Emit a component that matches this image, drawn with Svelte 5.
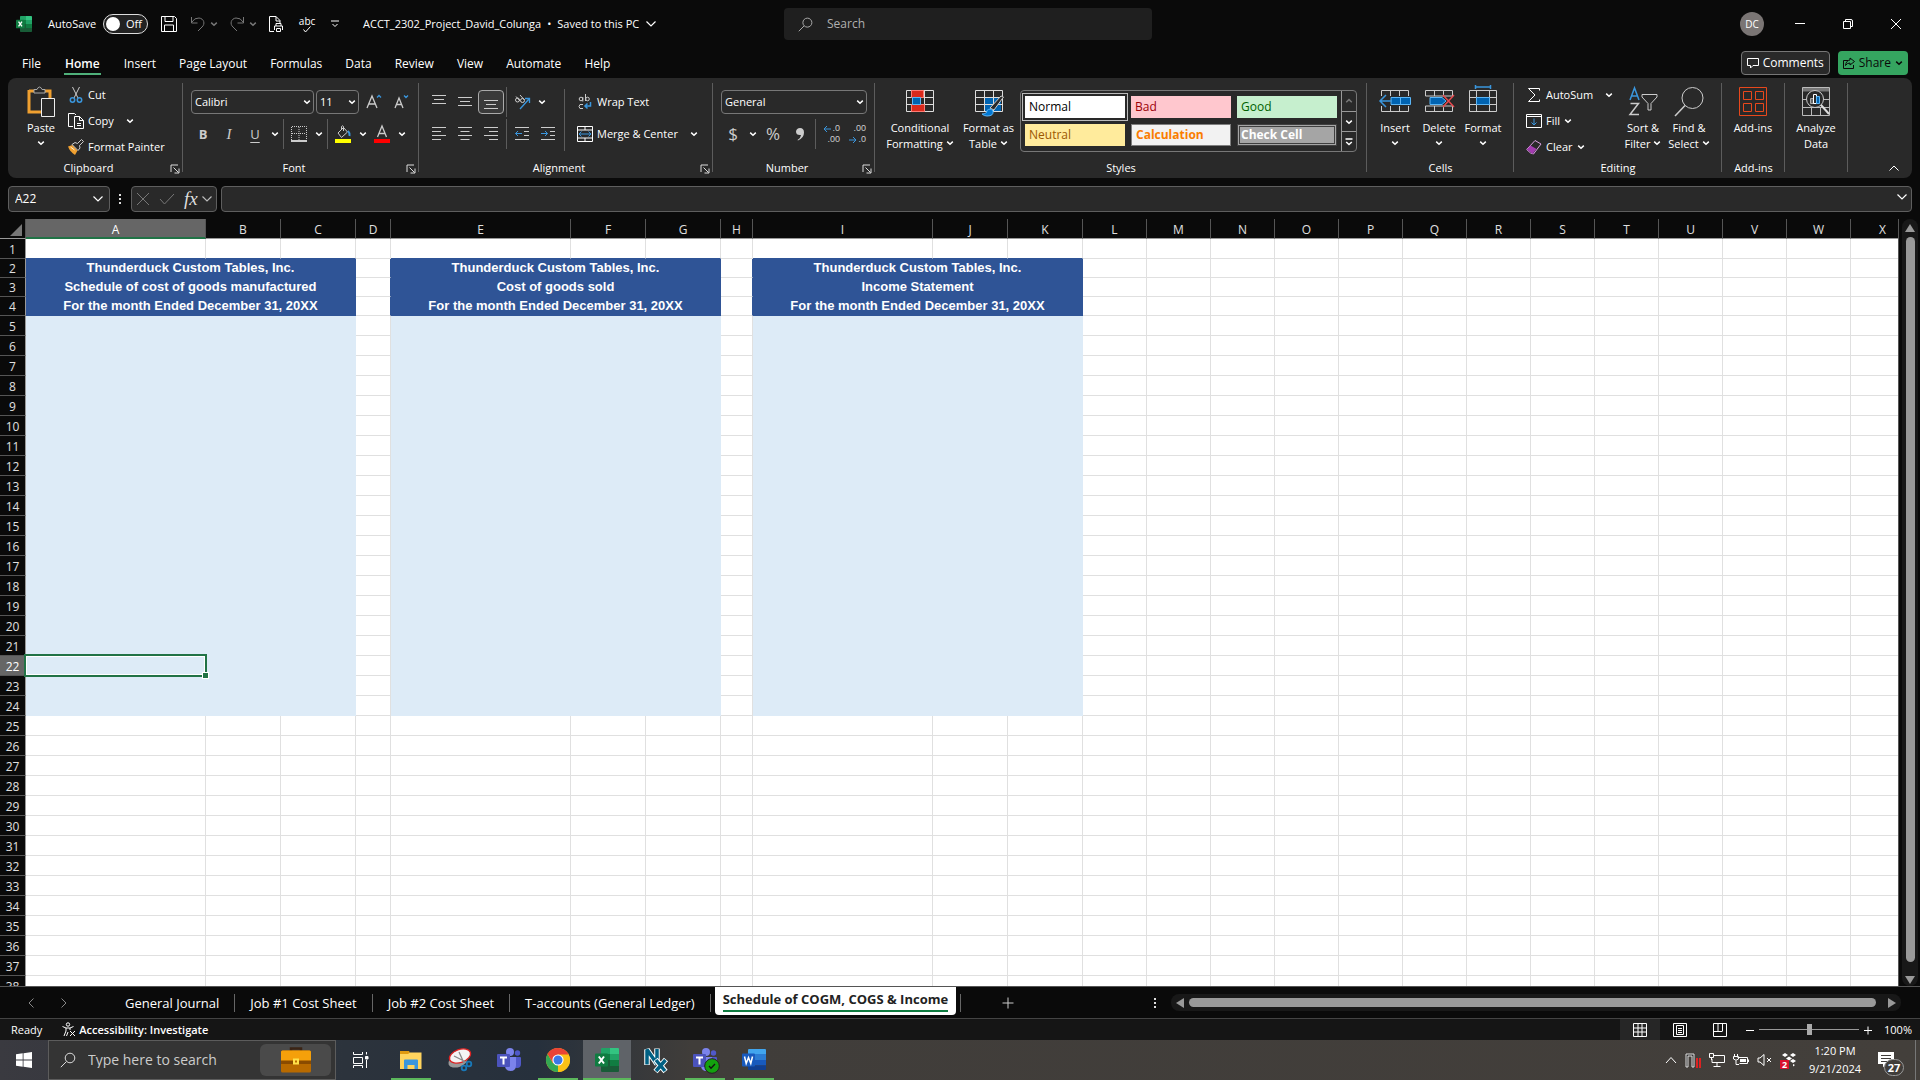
<script>
  const tabs = ['File', 'Home', 'Insert', 'Page Layout', 'Formulas', 'Data', 'Review', 'View', 'Automate', 'Help']
  const sheets = ['General Journal', 'Job #1 Cost Sheet', 'Job #2 Cost Sheet', 'T-accounts (General Ledger)']
  const activeSheet = 'Schedule of COGM, COGS & Income'

  const cellStyles = ['Normal', 'Bad', 'Good', 'Neutral', 'Calculation', 'Check Cell']

  const columns = [
    ['A', 'wide'], ['B', 'mid'], ['C', 'mid'], ['D', 'gap'],
    ['E', 'wide'], ['F', 'mid'], ['G', 'mid'], ['H', 'gap small'],
    ['I', 'wide'], ['J', 'mid'], ['K', 'mid'],
    ...'LMNOPQRSTUVWX'.split('').map((name) => [name, 'std'])
  ]

  const company = 'Thunderduck Custom Tables, Inc.'
  const period = 'For the month Ended December 31, 20XX'
  const headings = {
    2: [company, company, company],
    3: ['Schedule of cost of goods manufactured', 'Cost of goods sold', 'Income Statement'],
    4: [period, period, period]
  }

  const rows = Array.from({ length: 38 }, (_, i) => i + 1)
  const rest = columns.slice(11)

  // D and H stay empty between the three statements
  const isGap = (i) => i === 3 || i === 7
  const inSection = (i) => i < 11 && !isGap(i)

  let search = $state('')
  let zoom = $state(50)
</script>

{#snippet chev()}
  <svg class="chev" viewBox="0 0 8 8" width="8" height="8"><path d="M1.2 2.6 4 5.2l2.8-2.6" /></svg>
{/snippet}

{#snippet bigChev()}
  <svg class="chev thin" viewBox="0 0 12 8" width="12" height="8"><path d="M1.5 1.5 6 6l4.5-4.5" /></svg>
{/snippet}

{#snippet launcher()}
  <button class="launcher" aria-label="More options">
    <svg viewBox="0 0 10 10" width="10" height="10"><path d="M1 8V1h7M3.5 3.5l5 5M9 4.5V9H4.5" /></svg>
  </button>
{/snippet}

{#snippet excelLogo(size)}
  <svg viewBox="0 0 24 24" width={size} height={size}>
    <path fill="#21a366" d="M7 0h9v6H6V1q0-1 1-1z" />
    <path fill="#33c481" d="M15 0h8q1 0 1 1v5h-9z" />
    <path fill="#107c41" d="M6 6h9v6H6z" />
    <path fill="#21a366" d="M15 6h9v6h-9z" />
    <path fill="#185c37" d="M6 12h18v11q0 1-1 1H7q-1 0-1-1z" />
    <path fill="#107c41" d="M15 12h9v6h-9z" />
    <rect x="0" y="5.5" width="13" height="13" rx="1" fill="#107c41" />
    <path d="m3.8 8.5 5.2 7M9 8.5l-5.2 7" stroke="#fff" stroke-width="2" fill="none" />
  </svg>
{/snippet}

{#snippet teamsLogo()}
  <svg viewBox="0 0 24 24" width="24" height="24">
    <circle cx="20.5" cy="5" r="2.7" fill="#5059c9" />
    <path fill="#5059c9" d="M17 9h6q1 0 1 1v6q0 4-4 4-3 0-3-3z" />
    <circle cx="13" cy="4" r="4" fill="#7b83eb" />
    <path fill="#7b83eb" d="M8 9h11v8q0 6-5.5 6T8 17z" />
    <rect x="0" y="6" width="13" height="13" rx="1" fill="#4b53bc" />
    <path d="M3 9.5h7M6.500 9v7.500" stroke="#fff" stroke-width="2" />
  </svg>
{/snippet}

{#snippet lens(size)}
  <svg class="line" viewBox="0 0 16 16" width={size} height={size}><circle cx="10" cy="6" r="4.8" /><path d="M6.5 9.5.8 15.2" /></svg>
{/snippet}

<div class="window">
  <header class="titlebar">
    <div class="left">
      <div class="quick">
        {@render excelLogo(16)}
        <span class="autosave">AutoSave</span>
        <button class="toggle" role="switch" aria-checked="false" aria-label="AutoSave"><i></i>Off</button>
        <button aria-label="Save">
          <svg class="line" viewBox="0 0 16 16" width="16" height="16"><path d="M.5.5h13l2 2v13H.5zM4 .5v5h8v-5M3.5 15.5V9h9v6.5" /></svg>
        </button>
        <button class="dim pair" aria-label="Undo">
          <svg class="line" viewBox="0 0 16 16" width="16" height="16"><path d="M1.500 1v6h6M1.5 6.500q3-5 7.500-4.500c5 .5 6.500 6 3 9L8 15" /></svg>
          {@render chev()}
        </button>
        <button class="dim pair" aria-label="Redo">
          <svg class="line" viewBox="0 0 16 16" width="16" height="16"><path d="M14.500 1v6h-6M14.500 6.500q-3-5-7.500-4.500c-5 .5-6.500 6-3 9L8 15" /></svg>
          {@render chev()}
        </button>
        <button aria-label="Print preview">
          <svg class="line" viewBox="0 0 16 16" width="16" height="16"><path d="M6 15.500H1.500V.500H8l4 4V7M8 .5V5h4M8 10V7.500h5V10M6.500 14v-4h8v4M8.500 12.500h4v3h-4z" /></svg>
        </button>
        <button class="spell" aria-label="Spelling">abc
          <svg class="line" viewBox="0 0 10 7" width="10" height="7"><path d="m1.500 3.500 2 2.500 5-5.500" /></svg>
        </button>
        <button aria-label="Customize toolbar">
          <svg class="line" viewBox="0 0 10 8" width="10" height="8"><path d="M1 1h8M2.500 4 5 6.500 7.500 4" /></svg>
        </button>
      </div>
      <button class="doc"><span>ACCT_2302_Project_David_Colunga</span><span>•</span><span>Saved to this PC</span>{@render bigChev()}</button>
    </div>
    <label class="search">
      {@render lens(15)}
      <input type="text" placeholder="Search" aria-label="Search" bind:value={search} />
    </label>
    <div class="caption-buttons">
      <button class="avatar">DC</button>
      <button aria-label="Minimize"><svg class="line" viewBox="0 0 12 12" width="12" height="12"><path d="M1 5.500h10" /></svg></button>
      <button aria-label="Restore"><svg class="line" viewBox="0 0 12 12" width="12" height="12"><path d="M1.500 3.500h7v7h-7zM3.500 3V1.500H9Q10.500 1.500 10.500 3v5.500H9" /></svg></button>
      <button aria-label="Close"><svg class="line" viewBox="0 0 12 12" width="12" height="12"><path d="m1 1 10 10M11 1 1 11" /></svg></button>
    </div>
  </header>

  <nav class="tabs">
    {#each tabs as tab}
      <a href="#{tab}" class:active={tab === 'Home'}>{tab}</a>
    {/each}
    <div class="actions">
      <button class="comments">
        <svg class="line" viewBox="0 0 12 12" width="12" height="12"><path d="M.5 1.500h11v7H6L3.500 11V8.500h-3z" /></svg>
        Comments
      </button>
      <button class="share">
        <svg class="line" viewBox="0 0 12 12" width="12" height="12"><path d="M5 3.500H.500v8h10V8M7 1l4.500 3.500L7 8V6Q4 6 2.500 8.500 3 3.500 7 3z" /></svg>
        Share {@render chev()}
      </button>
    </div>
  </nav>

  <section class="ribbon">
    <div class="group clipboard">
      <div class="tools">
        <button class="large">
          <svg viewBox="0 0 30 32" width="30" height="32">
            <path d="M3 5h5m11 0h5v7M3 4v22h13" fill="none" stroke="#f0a030" stroke-width="3" />
            <path d="M8 7V3.500h3q1-2.500 2.500-2.500T16 3.500h3V7z" fill="#292929" stroke="#aaa" />
            <path d="M15.500 12.500h13v18h-13z" fill="#292929" stroke="#eee" />
          </svg>
          <span>Paste</span><span>{@render chev()}</span>
        </button>
        <div class="stack">
          <button>
            <svg viewBox="0 0 16 16" width="16" height="16" fill="none"><path d="M4.500 0 10 11M11.500 0 6 11" stroke="#ccc" /><circle cx="4.500" cy="13" r="2.200" stroke="#3a96dd" stroke-width="1.500" /><circle cx="11.500" cy="13" r="2.200" stroke="#3a96dd" stroke-width="1.500" /></svg>
            Cut
          </button>
          <button>
            <svg class="line" viewBox="0 0 16 16" width="16" height="16"><path d="M5 13.500H.500V.500h6L8 2M6.500 3.500h5l4 4v8h-9zM11.500 3.500v4h4M9 10.500h4M9 12.500h4" /></svg>
            Copy <em>{@render chev()}</em>
          </button>
          <button>
            <svg viewBox="0 0 16 16" width="16" height="16"><path d="M0 7.500 4.500 6l5 5.500L7 16Q2 13 0 7.500z" fill="#f0a030" /><path d="m4 5.500 3-2 2.500 1L13.500.500 15.500 2.500l-4 4 .5 2.500-2 2.500z" fill="#292929" stroke="#ccc" /><path d="m2.500 8 4 3" stroke="#fff0cc" /></svg>
            Format Painter
          </button>
        </div>
      </div>
      <footer class="has-launcher">Clipboard {@render launcher()}</footer>
    </div>

    <div class="group font">
      <div class="tools rows">
        <div class="row fields">
          <label class="select family"><select aria-label="Font"><option>Calibri</option></select>{@render chev()}</label>
          <label class="select size"><select aria-label="Font size"><option>11</option></select>{@render chev()}</label>
          <button class="cell" aria-label="Increase font size"><svg viewBox="0 0 16 16" width="16" height="16" fill="none"><path d="M1 14 6 2l5 12M3 10h6" stroke="#ccc" stroke-width="1.300" /><path d="m11 3.500 2-2 2 2" stroke="#3a96dd" stroke-width="1.300" /></svg></button>
          <button class="cell" aria-label="Decrease font size"><svg viewBox="0 0 16 16" width="16" height="16" fill="none"><path d="m1 14 4-10 4 10M2.500 10.500h5" stroke="#ccc" stroke-width="1.300" /><path d="m10 1.500 2 2 2-2" stroke="#3a96dd" stroke-width="1.300" /></svg></button>
        </div>
        <div class="row">
          <button class="cell glyph"><b>B</b></button>
          <button class="cell glyph italic">I</button>
          <button class="cell glyph under">U</button>
          <button class="arrow" aria-label="Underline options">{@render chev()}</button>
          <i class="rule"></i>
          <button class="cell" aria-label="Borders"><svg class="line" viewBox="0 0 16 16" width="16" height="16"><path d="M.5 14V.500h15V14M8 1v13M1 7.500h14" stroke-dasharray="1 1" /><path d="M0 15h16" stroke-width="2" /></svg></button>
          <button class="arrow" aria-label="Border options">{@render chev()}</button>
          <i class="rule"></i>
          <button class="cell" aria-label="Fill color"><svg viewBox="0 0 16 18" width="16" height="18" fill="none"><path d="m3 8 5.500-5.500 4 4.500-6 5.500zM6.500 5V1.500q1.500-1.500 2 0V6" stroke="#ccc" /><path d="M13 6q2 2 1.500 5" stroke="#3a96dd" stroke-width="2" /><path d="M0 14h16v4H0z" fill="#ff0" /></svg></button>
          <button class="arrow" aria-label="Fill options">{@render chev()}</button>
          <button class="cell" aria-label="Font color"><svg viewBox="0 0 16 18" width="16" height="18" fill="none"><path d="m3.500 12 4.500-11 4.500 11M5 8.500h6" stroke="#ccc" stroke-width="1.300" /><path d="M0 14h16v4H0z" fill="red" /></svg></button>
          <button class="arrow" aria-label="Font color options">{@render chev()}</button>
        </div>
      </div>
      <footer class="has-launcher">Font {@render launcher()}</footer>
    </div>

    <div class="group alignment">
      <div class="tools">
        <div class="rows">
          <div class="row">
            <button class="cell" aria-label="Top align"><svg class="line" viewBox="0 0 16 16" width="16" height="16"><path d="M1 1.500h14M3 5.500h10M1 9.500h14" /></svg></button>
            <button class="cell" aria-label="Middle align"><svg class="line" viewBox="0 0 16 16" width="16" height="16"><path d="M1 3.500h14M3 7.500h10M1 11.500h14" /></svg></button>
            <button class="cell pressed" aria-label="Bottom align"><svg class="line" viewBox="0 0 16 16" width="16" height="16"><path d="M1 6.500h14M3 10.500h10M1 14.500h14" /></svg></button>
            <i class="rule"></i>
            <button class="cell" aria-label="Orientation"><svg viewBox="0 0 16 16" width="16" height="16" fill="none"><circle cx="3.500" cy="6" r="2" stroke="#ccc" /><path d="M2 2.500 6 7M6 1l4.500 5" stroke="#ccc" /><circle cx="8.500" cy="6.500" r="2" stroke="#ccc" /><path d="M6 15 15 5m-4-.5h4.500V9" stroke="#3a96dd" stroke-width="1.300" /></svg></button>
            <button class="arrow" aria-label="Orientation options">{@render chev()}</button>
          </div>
          <div class="row">
            <button class="cell" aria-label="Align left"><svg class="line" viewBox="0 0 16 16" width="16" height="16"><path d="M1 1.500h14M1 5.500h9M1 9.500h14M1 13.500h9" /></svg></button>
            <button class="cell" aria-label="Center"><svg class="line" viewBox="0 0 16 16" width="16" height="16"><path d="M1 1.500h14M3.500 5.500h9M1 9.500h14M3.500 13.500h9" /></svg></button>
            <button class="cell" aria-label="Align right"><svg class="line" viewBox="0 0 16 16" width="16" height="16"><path d="M1 1.500h14M6 5.500h9M1 9.500h14M6 13.500h9" /></svg></button>
            <i class="rule"></i>
            <button class="cell" aria-label="Decrease indent"><svg class="line" viewBox="0 0 16 16" width="16" height="16"><path d="M1 1.500h14M10 5.500h5M10 9.500h5M1 13.500h14" /><path d="M8 7.500H1.500M4 5 1.500 7.500 4 10" class="blue" /></svg></button>
            <button class="cell" aria-label="Increase indent"><svg class="line" viewBox="0 0 16 16" width="16" height="16"><path d="M1 1.500h14M10 5.500h5M10 9.500h5M1 13.500h14" /><path d="M1 7.500h6.500M5 5l2.500 2.500L5 10" class="blue" /></svg></button>
          </div>
        </div>
        <i class="rule tall"></i>
        <div class="rows">
          <button class="text">
            <svg viewBox="0 0 16 16" width="16" height="16" fill="none"><circle cx="4" cy="5" r="1.800" stroke="#ccc" /><path d="M5.800 3v4.500M8.500 0v7" stroke="#ccc" /><circle cx="10.500" cy="5" r="1.800" stroke="#ccc" /><path d="M6 10.500Q2 9.500 2 12.500T6 14.500" stroke="#ccc" /><path d="M13.500 8v4H8m2.500-2.500L8 12l2.500 2.500" stroke="#3a96dd" stroke-width="1.500" /></svg>
            Wrap Text
          </button>
          <button class="text">
            <svg class="line" viewBox="0 0 16 16" width="16" height="16"><path d="M.5.500h15v15H.500zM.500 4h15M.500 12h15M8 .500V4M8 12v3.500" /><path d="M2 8h12M4.500 5.500 2 8l2.500 2.500M11.500 5.500 14 8l-2.500 2.500" class="blue" /></svg>
            Merge &amp; Center <em>{@render chev()}</em>
          </button>
        </div>
      </div>
      <footer class="has-launcher">Alignment {@render launcher()}</footer>
    </div>

    <div class="group number">
      <div class="tools rows">
        <div class="row fields">
          <label class="select format"><select aria-label="Number format"><option>General</option></select>{@render chev()}</label>
        </div>
        <div class="row">
          <button class="cell glyph money">$</button>
          <button class="arrow" aria-label="Currency options">{@render chev()}</button>
          <button class="cell glyph money percent-style">%</button>
          <button class="cell" aria-label="Comma style"><svg viewBox="0 0 10 14" width="10" height="14"><path d="M5 1q4 0 4 4.500Q9 11 3 13.500L2.500 13Q6 10.500 6 8 1 8.500 1 4.500 1.500 1 5 1z" fill="#ccc" /></svg></button>
          <i class="rule"></i>
          <button class="cell decimals" aria-label="Increase decimal">
            <span><svg class="line" viewBox="0 0 8 8" width="8" height="8"><path d="M8 4H1M4 1 1 4l3 3" class="blue" /></svg>.0</span>
            <span>.00</span>
          </button>
          <button class="cell decimals" aria-label="Decrease decimal">
            <span>.00</span>
            <span><svg class="line" viewBox="0 0 8 8" width="8" height="8"><path d="M0 4h7M4 1l3 3-3 3" class="blue" /></svg>.0</span>
          </button>
        </div>
      </div>
      <footer class="has-launcher">Number {@render launcher()}</footer>
    </div>

    <div class="group styles">
      <div class="tools">
        <button class="large">
          <svg viewBox="0 0 30 32" width="30" height="32" fill="none">
            <path d="M1.500 4.500h27v21h-27zM1.500 11.500h27M1.500 18.500h27M7.500 4v21M19.500 4v21" stroke="#ddd" />
            <path d="M6.500 4.500h12v7h-12zM6.500 18.500h13v7h-13z" fill="#d9291c" stroke="#ff7b73" /><path d="M7.500 11.500h8v7h-8z" fill="#0063b1" stroke="#5bb5f5" />
          </svg>
          <span>Conditional</span><span>Formatting {@render chev()}</span>
        </button>
        <button class="large">
          <svg viewBox="0 0 30 32" width="30" height="32" fill="none">
            <path d="M10 11h17v14H10z" fill="#0063b1" />
            <path d="M1.500 4.500h27v21h-27zM1.500 11.500h27M1.500 18.500h27M10.500 4v21M19.500 4v21" stroke="#ddd" />
            <path d="m16 22 11-12 2.500 1L20 24z" fill="#292929" stroke="#ccc" /><path d="M8 28q5 0 5-3.500 3-3 6 .5 1 5-6 5-3 0-5-2z" fill="#0078d4" stroke="#5bb5f5" />
          </svg>
          <span>Format as</span><span>Table {@render chev()}</span>
        </button>
        <div class="gallery">
          <div class="swatches">
            {#each cellStyles as name}
              <button class={name.toLowerCase().replace(' ', '-')}>{name}</button>
            {/each}
          </div>
          <div class="pager">
            <button class="dim" aria-label="Previous styles"><svg class="chev" viewBox="0 0 8 8" width="8" height="8"><path d="M1.200 5.200 4 2.600l2.800 2.600" /></svg></button>
            <button aria-label="Next styles">{@render chev()}</button>
            <button aria-label="All styles"><svg class="chev" viewBox="0 0 8 8" width="8" height="8"><path d="M.5 1h7M1.200 4 4 6.600 6.800 4" /></svg></button>
          </div>
        </div>
      </div>
      <footer>Styles</footer>
    </div>

    <div class="group cells">
      <div class="tools">
        <button class="large">
          <svg viewBox="0 0 32 32" width="32" height="32" fill="none">
            <path d="M2.500 4.500h27v21h-27zM11.500 4v21M20.500 4v21" stroke="#ccc" /><path d="M0 10h32v10H0z" fill="#292929" /><path d="M12 11.500h19.500v7H12zM21.500 11v7" fill="#0063b1" stroke="#5bb5f5" /><path d="M13 15H1.500M7 9 1 15l6 6" stroke="#3a96dd" stroke-width="1.500" />
          </svg>
          <span>Insert</span><span>{@render chev()}</span>
        </button>
        <button class="large">
          <svg viewBox="0 0 32 32" width="32" height="32" fill="none">
            <path d="M2.500 10V4.500h27V10M2.500 20v5.500h27V20M11.500 4v6M20.500 4v6M11.500 20v5M20.500 20v5M2.500 10H29M2.500 20H29" stroke="#ccc" /><path d="M7 11.500h12l4 3.500-4 3.500H7z" fill="#0063b1" stroke="#5bb5f5" /><path d="m20 9 11 12M31 9 20 21" stroke="#e8484d" stroke-width="1.500" />
          </svg>
          <span>Delete</span><span>{@render chev()}</span>
        </button>
        <button class="large">
          <svg viewBox="0 0 32 32" width="32" height="32" fill="none">
            <path d="M2.500 4.500h27v21h-27zM2.500 11.500h27M2.500 18.500h27M9.500 4v21M22.500 4v21" stroke="#ccc" /><path d="M9.500 11.500h13v7h-13z" fill="#0063b1" stroke="#5bb5f5" /><path d="M9 1h14M8.500-1v4M23.500-1v4" stroke="#3a96dd" stroke-width="1.500" />
          </svg>
          <span>Format</span><span>{@render chev()}</span>
        </button>
      </div>
      <footer>Cells</footer>
    </div>

    <div class="group editing">
      <div class="tools">
        <div class="stack">
          <button>
            <svg class="line" viewBox="0 0 16 16" width="16" height="16"><path d="M13.500 3.500v-2h-11L9 8l-6.500 6.500h11v-2" /></svg>
            AutoSum <em>{@render chev()}</em>
          </button>
          <button>
            <svg class="line" viewBox="0 0 16 16" width="16" height="16"><path d="M.5 1.500h15v13H.500zM.500 3.500h15" /><path d="M8 5.500V12M5.500 9.500 8 12l2.500-2.500" class="blue" /></svg>
            Fill {@render chev()}
          </button>
          <button>
            <svg viewBox="0 0 16 16" width="16" height="16"><path d="M.7 10.500 9 1.500l6 3.500-7.500 10L4.500 14z" fill="none" stroke="#d9a0e0" /><path d="m1 10.500 3.500-4L10.500 10l-4 5z" fill="#a33bb0" /></svg>
            Clear {@render chev()}
          </button>
        </div>
        <button class="large">
          <svg viewBox="0 0 30 32" width="30" height="32" fill="none">
            <path d="M2 14 6.500 2 11 14M3.500 10h6" stroke="#3a96dd" stroke-width="1.500" /><path d="M2.500 17.500h8L2 28.500h9" stroke="#ccc" stroke-width="1.500" /><path d="M14 8.500h15v2.500l-6 6.500V24h-3v-6.500L14 11z" stroke="#ccc" />
          </svg>
          <span>Sort &amp;</span><span>Filter {@render chev()}</span>
        </button>
        <button class="large">
          <svg viewBox="0 0 30 32" width="30" height="32" fill="none"><circle cx="18.500" cy="12" r="10.500" stroke="#ccc" /><path d="M11 19.500 1 30" stroke="#ccc" stroke-width="1.500" /></svg>
          <span>Find &amp;</span><span>Select {@render chev()}</span>
        </button>
      </div>
      <footer>Editing</footer>
    </div>

    <div class="group addins">
      <div class="tools">
        <button class="large">
          <svg viewBox="0 0 30 32" width="30" height="32" fill="none" stroke="#e8481c"><path d="M1.500 1.500h27v28h-27zM5.500 5.500h8v8h-8zM17.500 5.500h8v8h-8zM5.500 17.500h8v8h-8zM17.500 17.500h8v8h-8z" /></svg>
          <span>Add-ins</span>
        </button>
      </div>
      <footer>Add-ins</footer>
    </div>

    <div class="group addins">
      <div class="tools">
        <button class="large">
          <svg viewBox="0 0 30 32" width="30" height="32" fill="none">
            <path d="M1.500 1.500h27v4h-27z" fill="#777" /><path d="M1.500 1.500h27v28h-27zM1.500 13.500h27M1.500 21.500h27M10.500 22v7M19.500 22v7" stroke="#bbb" /><circle cx="14" cy="13" r="8.500" fill="#292929" stroke="#ccc" /><path d="m20 19 8 9" stroke="#ddd" stroke-width="2" /><path d="M9.500 12.500h3v5h-3z" fill="#666" stroke="#aaa" /><path d="M12.500 8.500h3v9h-3z" stroke="#fff" /><path d="M15.500 10.500h3v7h-3z" fill="#0063b1" stroke="#5bb5f5" />
          </svg>
          <span>Analyze</span><span>Data</span>
        </button>
      </div>
    </div>
    <button class="collapse" aria-label="Collapse ribbon"><svg class="line" viewBox="0 0 12 8" width="12" height="8"><path d="M1.500 6.500 6 2l4.500 4.500" /></svg></button>
  </section>

  <section class="formula">
    <label class="namebox"><input type="text" value="A22" aria-label="Name box" />{@render bigChev()}</label>
    <svg class="dots" viewBox="0 0 3 12" width="3" height="12"><path d="M0 1h2v2H0zM0 5h2v2H0zM0 9h2v2H0z" /></svg>
    <div class="fx">
      <button class="dim" aria-label="Cancel"><svg class="line" viewBox="0 0 14 14" width="14" height="14"><path d="m1 1 12 12M13 1 1 13" /></svg></button>
      <button class="dim" aria-label="Enter"><svg class="line" viewBox="0 0 16 14" width="16" height="14"><path d="m1 7 4.500 5L15 2" /></svg></button>
      <button class="fn">fx</button>
      {@render bigChev()}
    </div>
    <label class="entry"><input type="text" aria-label="Formula" />{@render bigChev()}</label>
  </section>

  <main>
    <div class="sheet">
      <table>
        <colgroup>
          <col class="numbers" />
          {#each columns as [name, kind]}<col class={kind} />{/each}
        </colgroup>
        <thead>
          <tr>
            <th class="corner"><svg viewBox="0 0 12 12" width="12" height="12"><path d="M12 0v12H0z" /></svg></th>
            {#each columns as [name]}<th class:current={name === 'A'}>{name}</th>{/each}
          </tr>
        </thead>
        <tbody>
          {#each rows as row}
            {#if headings[row]}
              <tr class="heading">
                <th>{row}</th>
                {#each headings[row] as text, i}
                  <td colspan="3" class="title">{text}</td>
                  {#if i < 2}<td class="edge"></td>{/if}
                {/each}
                {#each rest as _}<td></td>{/each}
              </tr>
            {:else}
              <tr>
                <th class:current={row === 22}>{row}</th>
                {#each columns as _, i}
                  <td class:filled={row > 4 && row < 25 && inSection(i)} class:above={row === 1 && inSection(i)}>
                    {#if row === 22 && i === 0}<div class="selection"></div>{/if}
                  </td>
                {/each}
              </tr>
            {/if}
          {/each}
        </tbody>
      </table>
    </div>
    <div class="vscroll">
      <svg viewBox="0 0 10 8" width="10" height="8"><path d="M5 0 10 8H0z" /></svg>
      <div class="thumb"></div>
      <svg viewBox="0 0 10 8" width="10" height="8"><path d="M0 0h10L5 8z" /></svg>
    </div>
  </main>

  <section class="sheets">
    <div class="arrows">
      <button aria-label="Previous sheet"><svg class="line" viewBox="0 0 8 12" width="8" height="12"><path d="M6.500 1.500 2 6l4.500 4.500" /></svg></button>
      <button aria-label="Next sheet"><svg class="line" viewBox="0 0 8 12" width="8" height="12"><path d="M1.500 1.500 6 6l-4.500 4.500" /></svg></button>
    </div>
    {#each sheets as sheet}
      <button class="sheet-tab">{sheet}</button>
    {/each}
    <button class="sheet-tab current"><span>{activeSheet}</span></button>
    <button class="add" aria-label="New sheet"><svg class="line" viewBox="0 0 12 12" width="12" height="12"><path d="M6 .500v11M.500 6h11" /></svg></button>
    <svg class="dots" viewBox="0 0 3 12" width="3" height="12"><path d="M0 1h2v2H0zM0 5h2v2H0zM0 9h2v2H0z" /></svg>
    <div class="hscroll">
      <svg viewBox="0 0 8 10" width="8" height="10"><path d="M8 0v10L0 5z" /></svg>
      <div class="thumb"></div>
      <svg viewBox="0 0 8 10" width="8" height="10"><path d="M0 0v10l8-5z" /></svg>
    </div>
  </section>

  <section class="status">
    <span>Ready</span>
    <button class="access">
      <svg class="line" viewBox="0 0 15 15" width="15" height="15"><circle cx="7" cy="2.500" r="1.700" /><path d="M1.500 4.500 5 6v3l-2 5M12.500 4.500 9 6v2M5 6h4M5.500 14 7 10M9 9l5 5M14 9l-5 5" /></svg>
      Accessibility: Investigate
    </button>
    <div class="views">
      <button class="on" aria-label="Normal view"><svg class="line" viewBox="0 0 14 14" width="14" height="14"><path d="M.5.500h13v13H.500zM.500 5h13M.500 9h13M5 .500v13M9 .500v13" /></svg></button>
      <button aria-label="Page layout view"><svg class="line" viewBox="0 0 14 14" width="14" height="14"><path d="M.5.500h13v13H.500zM3.500 2.500h7v9h-7zM5 5.500h4M5 7.500h4M5 9.500h4" /></svg></button>
      <button aria-label="Page break view"><svg class="line" viewBox="0 0 14 14" width="14" height="14"><path d="M.5.500h13v13H.500zM5 .500V8M9.500.500V8M.500 8.500h9" /></svg></button>
    </div>
    <button class="step" aria-label="Zoom out"><svg class="line" viewBox="0 0 10 10" width="10" height="10"><path d="M1 5.500h8" /></svg></button>
    <input type="range" min="0" max="100" aria-label="Zoom" bind:value={zoom} />
    <button class="step" aria-label="Zoom in"><svg class="line" viewBox="0 0 10 10" width="10" height="10"><path d="M1 5.500h8M5 1.500v8" /></svg></button>
    <button class="percent">100%</button>
  </section>

  <footer class="taskbar">
    <button class="start" aria-label="Start"><svg viewBox="0 0 16 16" width="16" height="16"><path fill="#fff" d="m0 2.300 6.700-1v6.300H0zM7.500 1.200 16 0v7.600H7.500zM0 8.400h6.700v6.300l-6.700-1zM7.500 8.400H16V16l-8.500-1.200z" /></svg></button>
    <label class="find">
      {@render lens(16)}
      <input type="text" placeholder="Type here to search" aria-label="Type here to search" />
      <span class="bag">
        <svg viewBox="0 0 32 26" width="32" height="26"><path d="M11 4V1.500h10V4" fill="none" stroke="#3b2415" stroke-width="2.500" /><rect x="1" y="3.500" width="30" height="22" rx="1.500" fill="#b86a00" /><path d="M1 5q0-1.500 1.500-1.500h27Q31 3.500 31 5v10H1z" fill="#f5a00a" /><path d="M1 13.500h30V17H1z" fill="#8a4b00" /><path d="M13 11.500h6v6h-6z" fill="#ffe14a" /><path d="M15 13.500h2v2h-2z" fill="#b86a00" /></svg>
      </span>
    </label>
    <div class="apps">
      <button class="view" aria-label="Task view"><svg class="line" viewBox="0 0 18 16" width="18" height="16"><path d="M1.500 0v2.500h9V0M1.500 5.500h9v6h-9zM1.500 16v-2.500h9V16M14.500 0v2.500M14.500 8v8" /><path d="M13.500 4.500h2.500v2.500h-2.500z" fill="#fff" /></svg></button>
      <button class="app open" aria-label="File Explorer"><svg viewBox="0 0 24 24" width="24" height="24"><path fill="#e09a10" d="M1 3h9l1 2-1 3H1z" /><path fill="#ffd45e" d="M1 6h8l2-1.500h11.500V21H1z" /><path fill="#3a96dd" d="M5 21v-8.500q0-1 1-1h12q1 0 1 1V21h-3.500v-4h-7v4z" /></svg></button>
      <button class="app" aria-label="Snipping Tool"><svg viewBox="0 0 24 24" width="24" height="24" fill="none"><ellipse cx="10" cy="13" rx="10" ry="6" transform="rotate(-20 10 13)" fill="#999" /><ellipse cx="12" cy="8" rx="11" ry="6.500" transform="rotate(-20 12 8)" fill="#f4f4f4" stroke="#d22" stroke-width="1.300" /><path d="m11 4 5 11M6 8l12 6" stroke="#888" stroke-width="1.300" /><circle cx="16" cy="20" r="2.300" stroke="#1878b8" stroke-width="1.800" /><circle cx="21" cy="16" r="2.300" stroke="#1878b8" stroke-width="1.800" /></svg></button>
      <button class="app" aria-label="Teams">{@render teamsLogo()}</button>
      <button class="app open" aria-label="Chrome"><svg viewBox="0 0 24 24" width="24" height="24"><circle cx="12" cy="12" r="12" fill="#fbc116" /><path fill="#34a853" d="M12 12v12A12 12 0 0 1 1.600 6l5.200 9z" /><path fill="#fbc116" d="M12 6.500h10.700A12 12 0 0 1 12 24l5-9z" /><path fill="#ea4335" d="M7 15 1.600 6a12 12 0 0 1 21 .500H12z" /><circle cx="12" cy="12" r="5.600" fill="#fff" /><circle cx="12" cy="12" r="4.500" fill="#3b78e7" /></svg></button>
      <button class="app open focused" aria-label="Excel">{@render excelLogo(24)}</button>
      <button class="app" aria-label="NX"><svg viewBox="0 0 24 24" width="24" height="24" fill="none" stroke-linejoin="bevel"><path d="M3 17V1.500L13 16V.500" stroke="#fff" stroke-width="5.500" /><path d="M3 16.500V1.500L13 16V1" stroke="#006083" stroke-width="3.500" /><path d="m11.500 11.500 10 12M22 11.500l-10.500 12" stroke="#fff" stroke-width="5.500" /><path d="m12 12 9 11M21.500 12 12 23" stroke="#006083" stroke-width="3.500" /></svg></button>
      <button class="app open" aria-label="Teams meeting"><span class="badged">{@render teamsLogo()}<svg class="ok" viewBox="0 0 16 16" width="16" height="16"><circle cx="8" cy="8" r="7.300" fill="#13a10e" stroke="#222" /><path d="m5 8 2 2.300L11 6" fill="none" stroke="#111" stroke-width="1.300" /></svg></span></button>
      <button class="app open" aria-label="Word"><svg viewBox="0 0 24 24" width="24" height="24"><path fill="#41a5ee" d="M7 1h16q1 0 1 1v4H6V2q0-1 1-1z" /><path fill="#2b7cd3" d="M6 6h18v6H6z" /><path fill="#185abd" d="M6 12h18v5.500H6z" /><path fill="#103f91" d="M6 17.500h18V21q0 1-1 1H7q-1 0-1-1z" /><rect x="0" y="5.500" width="13" height="13" rx="1" fill="#185abd" /><path d="m2.500 8.500 1.700 7 2.300-6 2.300 6 1.700-7" stroke="#fff" stroke-width="1.500" fill="none" /></svg></button>
    </div>
    <div class="tray">
      <button aria-label="Show hidden icons"><svg class="line" viewBox="0 0 12 8" width="12" height="8"><path d="M1 7 6 1.500 11 7" /></svg></button>
      <svg viewBox="0 0 16 16" width="16" height="16" fill="none"><path d="M1 15V2h8v13H7V4H3v11z" fill="#333" stroke="#ddd" /><path d="M12 6v10M15 6v10" stroke="#d22" stroke-width="2" /></svg>
      <svg class="line" viewBox="0 0 16 16" width="16" height="16"><path d="M5 3.500h10.500v7H3V7M8 11v3.500M4.500 14.500h7M.500 1.500h4v4h-4zM2.500 5.500V8" /></svg>
      <svg viewBox="0 0 16 16" width="16" height="16" fill="none"><path d="M4.500 5.500h10v6h-8" stroke="#fff" /><path d="M7 7h6v3H7zM15 7.500h1v2.500h-1z" fill="#fff" /><path d="M1.500 2v2M4.500 2v2M.500 4.500h5V7Q3 9.500.5 7zM3 8.500v4h3" stroke="#fff" /></svg>
      <svg class="line" viewBox="0 0 16 16" width="16" height="16"><path d="M1 6h2l4-3.500v11L3 10H1zM10 6l4 4M14 6l-4 4" /></svg>
      <span class="badged"><svg viewBox="0 0 16 16" width="16" height="16"><path fill="#fff" d="m4 1 3 2-3 2-3-2zM12 1l3 2-3 2-3-2zM8 4.500l3 2-3 2-3-2zM12 7l3 2-3 2-3-2zM12 12l2 1-2 1.500z" /></svg><b class="count">2</b></span>
      <time><span>1:20 PM</span><span>9/21/2024</span></time>
      <button class="badged" aria-label="Notifications"><svg viewBox="0 0 16 16" width="16" height="16"><path fill="#fff" d="M0 0h16v12H8l-3 3.500V12H0z" /><path d="M3 3.500h10M3 6.500h10M3 9.500h6" stroke="#403d3a" /></svg><b class="bubble">27</b></button>
    </div>
  </footer>
</div>

<style>
  :global(body) {
    background: #0a0a0a;
  }

  .window {
    display: flex;
    flex-direction: column;
    height: 100vh;
    overflow: hidden;
    background: #0a0a0a;
    color: #fff;
    font: 12px/16px 'Open Sans', 'Noto Sans', sans-serif;
  }

  button,
  input,
  select {
    font: inherit;
    color: inherit;
    background: none;
    border: 0;
    padding: 0;
    margin: 0;
    min-width: 0;
    outline: none;
  }

  button,
  label {
    display: flex;
    align-items: center;
  }

  svg {
    flex: none;
    display: block;
    overflow: visible;
  }

  .line,
  .chev {
    fill: none;
    stroke: currentColor;
  }

  .chev {
    stroke-width: 1.5;
  }

  .thin {
    stroke-width: 1.2;
  }

  .blue {
    stroke: #3a96dd;
  }

  .dim {
    color: #777;
  }

  /* title bar */
  .titlebar {
    display: grid;
    grid-template-columns: 1fr 368px 1fr;
    align-items: center;
    height: 48px;
    flex: none;
    padding-left: 16px;
  }

  .left {
    display: flex;
    align-items: center;
  }

  .quick {
    display: flex;
    align-items: center;
    gap: 13px;
    width: 347px;
    height: 40px;
  }

  .autosave {
    margin: 0 -6px 0 3px;
    font-size: 11px;
  }

  .toggle {
    gap: 6px;
    width: 45px;
    height: 20px;
    box-sizing: border-box;
    border: 1px solid #ddd;
    border-radius: 10px;
    padding-left: 2px;
    font-size: 11px;
    background: #222;
  }

  .toggle i {
    width: 14px;
    height: 14px;
    border-radius: 50%;
    background: #fff;
  }

  .pair {
    gap: 4px;
    margin-right: -2px;
  }

  .spell {
    flex-direction: column;
    width: 20px;
    font-size: 10px;
    line-height: 10px;
  }

  .doc {
    gap: 6px;
    font-size: 11px;
    white-space: nowrap;
  }

  .search {
    gap: 14px;
    height: 32px;
    padding: 0 14px;
    border-radius: 4px;
    background: #1f1f1f;
    color: #b0b0b0;
  }

  .search input::placeholder {
    color: #b0b0b0;
    opacity: 1;
  }

  .caption-buttons {
    display: flex;
    align-items: center;
    justify-self: end;
    height: 48px;
  }

  .caption-buttons button {
    width: 48px;
    justify-content: center;
  }

  .caption-buttons .avatar {
    width: 24px;
    height: 24px;
    margin-right: 12px;
    border-radius: 50%;
    background: #7a7574;
    font-size: 10px;
  }

  /* ribbon tabs */
  .tabs {
    display: flex;
    gap: 23px;
    height: 30px;
    flex: none;
    padding: 0 12px 0 22px;
  }

  .tabs a {
    height: 25px;
    line-height: 31px;
    color: #fff;
    text-decoration: none;
  }

  .tabs .active {
    padding: 0 1px;
    font-weight: 600;
    border-bottom: 2px solid #4fb07a;
  }

  .actions {
    display: flex;
    gap: 8px;
    margin: 3px 0 0 auto;
  }

  .actions button {
    gap: 4px;
    height: 24px;
    box-sizing: border-box;
    padding: 0 5px;
    border-radius: 4px;
  }

  .comments {
    border: 1px solid #777;
    background: #292929;
  }

  .actions .share {
    background: #35a560;
    color: #0a0a0a;
  }

  /* ribbon */
  .ribbon {
    display: flex;
    height: 100px;
    flex: none;
    margin: 0 8px;
    border-radius: 8px;
    background: #292929;
    font-size: 11px;
  }

  .group {
    display: flex;
    flex-direction: column;
    flex: none;
    background: linear-gradient(#5c5c5c, #5c5c5c) right 5px / 1px 89px no-repeat;
  }

  .group footer {
    display: flex;
    justify-content: center;
    height: 16px;
    position: relative;
  }

  .group .has-launcher {
    padding-right: 14px;
  }

  .clipboard { width: 175px; }
  .font { width: 236px; }
  .alignment { width: 294px; }
  .number { width: 162px; }
  .styles { width: 492px; }
  .cells { width: 147px; }
  .editing { width: 208px; }
  .addins { width: 63px; }

  .launcher {
    position: absolute;
    right: 3px;
    top: 4px;
  }

  .launcher svg {
    fill: none;
    stroke: #ddd;
  }

  .tools {
    display: flex;
    height: 82px;
    box-sizing: border-box;
  }

  .large {
    flex-direction: column;
    justify-content: flex-start;
    padding-top: 8px;
    white-space: nowrap;
  }

  .large svg:first-child {
    margin-bottom: 2px;
  }

  .large span {
    display: flex;
    align-items: center;
    gap: 3px;
    height: 16px;
  }

  .clipboard .large {
    padding-left: 18px;
    width: 48px;
  }

  .stack {
    padding-top: 4px;
  }

  .stack button {
    gap: 4px;
    height: 26px;
    white-space: nowrap;
  }

  .clipboard .stack {
    margin-left: 12px;
  }

  em {
    margin-left: 8px;
  }

  .rows {
    display: flex;
    flex-direction: column;
    gap: 8px;
    padding-top: 12px;
  }

  .row {
    display: flex;
    align-items: center;
    height: 24px;
    padding-left: 7px;
  }

  .fields {
    gap: 2px;
    padding-left: 8px;
  }

  .select {
    position: relative;
    height: 24px;
    box-sizing: border-box;
    border: 1px solid #777;
    border-radius: 4px;
  }

  .select select {
    appearance: none;
    width: 100%;
    padding-left: 3px;
  }

  .select svg {
    position: absolute;
    right: 2px;
    pointer-events: none;
  }

  .family { width: 123px; }
  .size { width: 43px; }
  .format { width: 146px; }

  .cell {
    width: 26px;
    height: 24px;
    box-sizing: border-box;
    justify-content: center;
    color: #ccc;
  }

  .arrow {
    width: 13px;
    height: 24px;
    justify-content: center;
  }

  .rule {
    width: 1px;
    height: 30px;
    margin: 0 2px;
    background: #5c5c5c;
  }

  .tall {
    height: 62px;
    margin: 11px 8px 0 3px;
  }

  .glyph {
    font-size: 13px;
  }

  .italic {
    font-family: 'Liberation Serif', serif;
    font-style: italic;
    font-size: 15px;
  }

  .under {
    text-decoration: underline;
    text-underline-offset: 3px;
  }

  .money {
    font-size: 17px;
  }

  .percent-style {
    width: 28px;
  }

  .pressed {
    border: 1px solid #aaa;
    border-radius: 4px;
    background: #3a3a3a;
  }

  .text {
    gap: 4px;
    height: 24px;
    padding-left: 4px;
    white-space: nowrap;
  }

  .decimals {
    flex-direction: column;
    align-items: flex-end;
    padding-right: 4px;
    font: 9px/11px 'Liberation Sans', sans-serif;
  }

  .decimals span {
    display: flex;
    align-items: center;
    gap: 1px;
  }

  .styles .large:nth-child(1) {
    width: 74px;
    margin-left: 8px;
  }

  .styles .large:nth-child(2) {
    width: 63px;
  }

  .gallery {
    display: flex;
    height: 62px;
    margin-top: 12px;
    box-sizing: border-box;
    border: 1px solid #777;
    border-radius: 4px;
  }

  .swatches {
    display: grid;
    grid-template-columns: repeat(3, 100px);
    gap: 6px;
    padding: 5px 4px;
    color: #000;
    font-size: 12px;
  }

  .swatches button {
    height: 22px;
    box-sizing: border-box;
    padding-left: 4px;
  }

  .normal {
    background: #fff;
    outline: 1px solid #bbb;
    outline-offset: 2px;
  }

  .bad { background: #ffc7ce; color: #9c0006; }
  .good { background: #c6efce; color: #006100; }
  .neutral { background: #ffeb9c; color: #9c5700; }

  .calculation {
    border: 1px solid #7f7f7f;
    background: #f2f2f2;
    color: #fa7d00;
    font-weight: 700;
  }

  .swatches .check-cell {
    border: 3px double #3f3f3f;
    padding-left: 1px;
    background: #a5a5a5;
    color: #fff;
    font-weight: 700;
  }

  .pager {
    display: grid;
    grid-template-rows: repeat(3, 20px);
    width: 15px;
  }

  .pager button {
    justify-content: center;
    border: 1px solid #999;
    border-width: 1px 0 0 1px;
  }

  .pager button:first-child {
    border-top: 0;
  }

  .cells .tools {
    padding-left: 6px;
  }

  .cells .large {
    width: 44px;
  }

  .editing .stack {
    width: 94px;
    padding-left: 12px;
  }

  .editing .large {
    width: 46px;
  }

  .addins .large {
    width: 62px;
  }

  .collapse {
    align-self: flex-end;
    margin: 0 12px 6px auto;
  }

  /* formula bar */
  .formula {
    display: flex;
    align-items: center;
    height: 26px;
    flex: none;
    margin: 8px 8px 7px;
  }

  .namebox,
  .fx,
  .entry {
    display: flex;
    align-items: center;
    height: 26px;
    box-sizing: border-box;
    border: 1px solid #5e5e5e;
    border-radius: 4px;
    background: #292929;
  }

  .namebox {
    width: 102px;
    padding: 0 5px 0 6px;
  }

  .namebox input,
  .entry input {
    flex: 1;
  }

  .dots {
    fill: #ddd;
    margin: 0 9px;
  }

  .fx {
    gap: 9px;
    width: 86px;
    padding: 0 1px 0 4px;
  }

  .fx .chev {
    margin-left: -6px;
    color: #bbb;
  }

  .fn {
    font: italic 19px/20px 'Liberation Serif', serif;
    color: #ddd;
  }

  .entry {
    flex: 1;
    margin-left: 4px;
    padding-right: 3px;
  }

  .entry .chev {
    margin-bottom: 4px;
  }

  /* grid */
  main {
    display: flex;
    flex: 1;
    min-height: 0;
  }

  .sheet {
    flex: 1;
    min-width: 0;
    overflow: hidden;
    background: #fff;
    border-right: 1px solid #555;
  }

  table {
    table-layout: fixed;
    width: 1915px;
    border-spacing: 0;
  }

  .numbers { width: 26px; }
  .wide { width: 180px; }
  .mid { width: 75px; }
  .gap { width: 35px; }
  .small { width: 32px; }
  .std { width: 64px; }

  th,
  td {
    height: 20px;
    box-sizing: border-box;
    padding: 0;
    border: 1px solid #e0e0e0;
    border-width: 0 1px 1px 0;
  }

  th {
    padding-top: 2px;
    border-color: #555;
    background: #0a0a0a;
    color: #e0e0e0;
    font-weight: 400;
    line-height: 16px;
  }

  tbody th {
    border-right-color: #999;
  }

  thead th {
    border-bottom-color: #999;
  }

  th.current {
    background: #666;
    color: #fff;
  }

  thead .current {
    box-shadow: inset 0 -1px #217346;
    border-bottom-color: #217346;
  }

  .corner svg {
    margin-left: 10px;
    fill: #777;
  }

  .heading th,
  .heading td {
    height: 19px;
  }

  td.title {
    border-color: #2f5496;
    background: #2f5496;
    color: #fff;
    font: bold 13px/16px 'Liberation Sans', sans-serif;
    text-align: center;
  }

  td.edge {
    border-right-color: #2f5496;
  }

  td.above {
    border-bottom-color: #2f5496;
  }

  td.filled {
    position: relative;
    border-color: #ddebf7;
    background: #ddebf7;
  }

  .selection {
    position: absolute;
    inset: -2px;
    z-index: 1;
    border: 2px solid #217346;
    box-shadow: inset 0 0 0 1px #fff;
  }

  .selection::after {
    content: '';
    position: absolute;
    right: -3px;
    bottom: -3px;
    width: 5px;
    height: 5px;
    background: #217346;
    box-shadow: 0 0 0 1px #fff;
  }

  .vscroll {
    display: flex;
    flex-direction: column;
    align-items: center;
    gap: 5px;
    width: 16px;
    box-sizing: border-box;
    margin: 0 2px 0 3px;
    padding: 5px 0 2px;
    border-radius: 8px;
    background: #181818;
    fill: #999;
  }

  .vscroll .thumb {
    flex: 1;
    width: 9px;
    margin-bottom: 9px;
  }

  .thumb {
    border-radius: 5px;
    background: #999;
  }

  /* sheet tabs */
  .sheets {
    display: flex;
    align-items: center;
    height: 33px;
    box-sizing: border-box;
    flex: none;
    border-top: 1px solid #555;
    border-bottom: 1px solid #444;
    padding-right: 19px;
    font-size: 13px;
  }

  .arrows {
    display: flex;
    gap: 25px;
    width: 83px;
    padding-left: 27px;
    color: #888;
  }

  .sheet-tab {
    height: 18px;
    padding: 0 15px;
    border-right: 1px solid #666;
    line-height: 14px;
    white-space: nowrap;
  }

  .current.sheet-tab {
    align-self: flex-start;
    height: 28px;
    margin-left: 4px;
    padding: 0 8px 2px;
    border: 0;
    border-radius: 0 0 4px 4px;
    background: #fff;
    color: #222;
    font-weight: 700;
  }

  .current span {
    height: 22px;
    line-height: 22px;
    border-bottom: 2px solid #107c41;
  }

  .add {
    height: 18px;
    margin-left: 4px;
    padding-left: 41px;
    border-left: 1px solid #666;
    color: #ccc;
  }

  .sheets .dots {
    margin: 0 14px 0 auto;
  }

  .hscroll {
    display: flex;
    align-items: center;
    gap: 5px;
    flex: 0 1 730px;
    height: 17px;
    box-sizing: border-box;
    padding: 0 5px;
    border-radius: 8px;
    background: #181818;
    fill: #999;
  }

  .hscroll .thumb {
    flex: 1;
    height: 9px;
    margin-right: 7px;
  }

  /* status bar */
  .status {
    display: flex;
    align-items: center;
    height: 21px;
    flex: none;
    padding: 0 8px 0 11px;
    background: #151515;
    font-size: 11px;
  }

  .access {
    gap: 3px;
    margin-left: 19px;
    font-weight: 600;
  }

  .views {
    display: flex;
    margin-left: auto;
    margin-right: 5px;
  }

  .views button {
    width: 40px;
    height: 21px;
    justify-content: center;
  }

  .views .on {
    background: #262626;
  }

  .status input {
    appearance: none;
    width: 100px;
    height: 12px;
    margin: 0 4px;
    background: linear-gradient(#999, #999) center / 100% 1px no-repeat;
  }

  .status input::-webkit-slider-thumb {
    appearance: none;
    width: 5px;
    height: 11px;
    background: #aaa;
  }

  .percent {
    width: 39px;
    justify-content: flex-end;
  }

  /* taskbar */
  .taskbar {
    display: flex;
    height: 40px;
    flex: none;
    background: linear-gradient(90deg, #3a3a40, #2c333c 18%, #26303c 28%, #403d3a 36%, #433f3b);
  }

  .start {
    width: 48px;
    justify-content: center;
  }

  .find {
    width: 288px;
    box-sizing: border-box;
    padding: 0 4px 0 11px;
    gap: 12px;
    border: 1px solid #5c5c5c;
    background: #343434;
    color: #ddd;
    font-size: 14px;
  }

  .find input {
    flex: 1;
  }

  .find input::placeholder {
    color: #ccc;
    opacity: 1;
  }

  .bag {
    display: flex;
    align-items: center;
    justify-content: center;
    width: 71px;
    height: 32px;
    border-radius: 6px;
    background: #4a4a4a;
  }

  .apps {
    display: flex;
    gap: 1px;
  }

  .view {
    width: 50px;
    justify-content: center;
  }

  .app {
    width: 48px;
    height: 40px;
    justify-content: center;
  }

  .open {
    background: linear-gradient(#5cb85c, #5cb85c) bottom / 40px 2px no-repeat;
  }

  .focused {
    background: linear-gradient(#5cb85c, #5cb85c) bottom / 100% 2px no-repeat #5f6368;
  }

  .badged {
    position: relative;
    display: flex;
  }

  .ok {
    position: absolute;
    right: -3px;
    bottom: -2px;
  }

  .tray {
    display: flex;
    align-items: center;
    gap: 8px;
    margin-left: auto;
    margin-right: 4px;
    padding-right: 21px;
    border-right: 1px solid #777;
  }

  .count {
    position: absolute;
    left: -1px;
    bottom: -1px;
    width: 9px;
    background: #d8102c;
    font-size: 9px;
    line-height: 9px;
    text-align: center;
  }

  time {
    display: flex;
    flex-direction: column;
    align-items: center;
    width: 60px;
    margin-right: 5px;
    line-height: 18px;
    font-size: 11px;
  }

  .bubble {
    position: absolute;
    left: 6px;
    top: 7px;
    width: 18px;
    border: 1px solid #999;
    border-radius: 9px;
    background: #403d3a;
    font-size: 11px;
    line-height: 15px;
    text-align: center;
  }
</style>
